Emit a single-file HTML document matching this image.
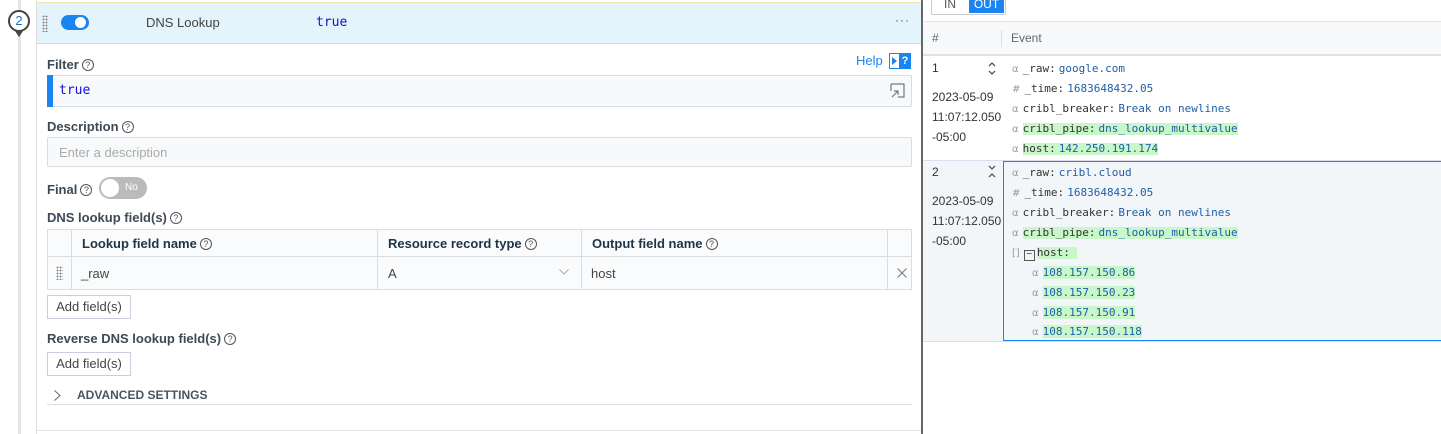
<!DOCTYPE html>
<html><head><meta charset="utf-8"><style>
*{margin:0;padding:0;box-sizing:border-box}
body{width:1441px;height:434px;overflow:hidden;background:#fff;font-family:"Liberation Sans",sans-serif;font-size:13px;color:#333;position:relative}
.a{position:absolute}
.lbl{font-weight:bold;color:#3d4a55;font-size:13px}
.q{display:inline-block;width:12px;height:12px;border:1px solid #555;border-radius:50%;font-size:9px;text-align:center;line-height:10px;color:#555;font-weight:normal;vertical-align:1px;margin-left:3px}
.mono{font-family:"DejaVu Sans Mono","Liberation Mono",monospace}
.ev{position:absolute;left:1012px;font-size:11px;height:19px;line-height:19px;white-space:nowrap}
.ev .t{color:#999;font-family:"DejaVu Sans",sans-serif;font-size:10px;margin-right:4px}
.ev .k{color:#333}
.ev .v{color:#1d5fa8}
.g{background:#c9f7c9}
.ts{position:absolute;left:932px;font-size:12px;color:#333;line-height:20px}
</style></head><body>
<div class="a" style="left:18px;top:0;width:3px;height:434px;background:#e3e3e3"></div>
<div class="a" style="left:8px;top:10px;width:22px;height:22px;border:2px solid #444;border-radius:50%;background:#fff;color:#1d6fc4;text-align:center;line-height:18px;font-size:13px">2</div>
<div class="a" style="left:15px;top:31px;width:0;height:0;border-left:4px solid transparent;border-right:4px solid transparent;border-top:6px solid #444"></div>
<div class="a" style="left:36px;top:0;width:886px;height:434px;border-left:1px solid #ddd"></div>
<div class="a" style="left:36px;top:2px;width:886px;height:1px;background:#f0e8b0"></div>
<div class="a" style="left:37px;top:3px;width:885px;height:41px;background:#e3f4fd;border-bottom:1px solid #c9dce6"></div>
<div class="a" style="left:42px;top:15px;width:6px;height:17px;background-image:radial-gradient(#888 0.8px,transparent 1px);background-size:3px 3px"></div>
<div class="a" style="left:61px;top:15px;width:28px;height:15px;border-radius:8px;background:#1a84f0"></div>
<div class="a" style="left:75px;top:17px;width:11px;height:11px;border-radius:50%;background:#fff"></div>
<div class="a" style="left:146px;top:15px;color:#444;font-size:13px">DNS Lookup</div>
<div class="a mono" style="left:316px;top:15px;color:#1010d0;font-size:13px">true</div>
<div class="a" style="left:895px;top:13px;color:#555;font-size:12px;letter-spacing:1px">···</div>
<div class="a lbl" style="left:47px;top:57px">Filter<span class="q">?</span></div>
<div class="a" style="left:856px;top:53px;color:#1a84f0;font-size:13px">Help</div>
<div class="a" style="left:889px;top:53px;width:22px;height:16px;border:1px solid #1a84f0;background:#fff"></div>
<div class="a" style="left:899px;top:54px;width:12px;height:14px;background:#1a84f0;color:#fff;font-weight:bold;font-size:11px;text-align:center;line-height:14px">?</div>
<div class="a" style="left:892px;top:57px;width:0;height:0;border-top:4px solid transparent;border-bottom:4px solid transparent;border-left:5px solid #1a84f0"></div>
<div class="a" style="left:47px;top:75px;width:865px;height:32px;background:#f7f9fb;border:1px solid #d8dde2;border-radius:2px"></div>
<div class="a" style="left:47px;top:75px;width:6px;height:32px;background:#1a84f0"></div>
<div class="a mono" style="left:59px;top:83px;color:#1010d0;font-size:13px">true</div>
<svg class="a" style="left:888px;top:82px" width="18" height="18" viewBox="0 0 18 18"><path d="M3 2H16V15H10M3 2V9M4 15L10 9M6 9H10V13" fill="none" stroke="#777" stroke-width="1.2"/></svg>
<div class="a lbl" style="left:47px;top:119px">Description<span class="q">?</span></div>
<div class="a" style="left:47px;top:137px;width:865px;height:30px;background:#f7f9fb;border:1px solid #d8dde2;border-radius:2px"></div>
<div class="a" style="left:59px;top:145px;color:#aaa">Enter a description</div>
<div class="a lbl" style="left:47px;top:182px">Final<span class="q">?</span></div>
<div class="a" style="left:99px;top:177px;width:48px;height:22px;border-radius:11px;background:#bbb"></div>
<div class="a" style="left:101px;top:179px;width:18px;height:18px;border-radius:50%;background:#fff"></div>
<div class="a" style="left:125px;top:182px;color:#fff;font-size:10px">No</div>
<div class="a lbl" style="left:47px;top:210px">DNS lookup field(s)<span class="q">?</span></div>
<div class="a" style="left:47px;top:229px;width:865px;height:61px;border:1px solid #ddd;background:#fafbfc"></div>
<div class="a" style="left:47px;top:256px;width:865px;height:1px;background:#ddd"></div>
<div class="a" style="left:71px;top:229px;width:1px;height:61px;background:#ddd"></div>
<div class="a" style="left:377px;top:229px;width:1px;height:61px;background:#ddd"></div>
<div class="a" style="left:581px;top:229px;width:1px;height:61px;background:#ddd"></div>
<div class="a" style="left:887px;top:229px;width:1px;height:61px;background:#ddd"></div>
<div class="a lbl" style="left:82px;top:236px;color:#1f3447">Lookup field name<span class="q">?</span></div>
<div class="a lbl" style="left:388px;top:236px;color:#1f3447">Resource record type<span class="q">?</span></div>
<div class="a lbl" style="left:592px;top:236px;color:#1f3447">Output field name<span class="q">?</span></div>
<div class="a" style="left:56px;top:266px;width:7px;height:14px;background-image:radial-gradient(#888 0.8px,transparent 1px);background-size:3px 3px"></div>
<div class="a" style="left:81px;top:266px;color:#444">_raw</div>
<div class="a" style="left:388px;top:266px;color:#444">A</div>
<svg class="a" style="left:559px;top:269px" width="10" height="6" viewBox="0 0 10 6"><path d="M0.5 0.5L5 5L9.5 0.5" fill="none" stroke="#aaa"/></svg>
<div class="a" style="left:591px;top:266px;color:#444">host</div>
<svg class="a" style="left:897px;top:268px" width="10" height="10" viewBox="0 0 10 10"><path d="M0.5 0.5L9.5 9.5M9.5 0.5L0.5 9.5" stroke="#777"/></svg>
<div class="a" style="left:47px;top:295px;width:84px;height:24px;border:1px solid #ccd;background:#fff;color:#444;text-align:center;line-height:22px">Add field(s)</div>
<div class="a lbl" style="left:47px;top:331px">Reverse DNS lookup field(s)<span class="q">?</span></div>
<div class="a" style="left:47px;top:352px;width:84px;height:24px;border:1px solid #ccd;background:#fff;color:#444;text-align:center;line-height:22px">Add field(s)</div>
<svg class="a" style="left:54px;top:390px" width="7" height="11" viewBox="0 0 7 11"><path d="M0.5 0.5L6 5.5L0.5 10.5" fill="none" stroke="#666"/></svg>
<div class="a" style="left:77px;top:388px;color:#4a5660;font-weight:bold;font-size:12px">ADVANCED SETTINGS</div>
<div class="a" style="left:47px;top:404px;width:865px;height:1px;background:#ddd"></div>
<div class="a" style="left:37px;top:430px;width:885px;height:1px;background:#e5e5e5"></div>
<div class="a" style="left:921px;top:0;width:2px;height:434px;background:#666"></div>
<div class="a" style="left:931px;top:-2px;width:75px;height:17px;border:1px solid #ccc;border-radius:2px;background:#fff"></div>
<div class="a" style="left:944px;top:-3px;color:#555;font-size:12px">IN</div>
<div class="a" style="left:969px;top:-3px;width:35px;height:16px;background:#1a84f0;color:#fff;font-size:12px;text-align:center">OUT</div>
<div class="a" style="left:923px;top:21px;width:518px;height:35px;background:#f7f9fb;border-top:1px solid #e3e6e9;border-bottom:2px solid #dde2e6"></div>
<div class="a" style="left:1001px;top:30px;width:1px;height:17px;background:#ddd"></div>
<div class="a" style="left:932px;top:31px;color:#666;font-size:12px">#</div>
<div class="a" style="left:1011px;top:31px;color:#666;font-size:12px">Event</div>
<div class="ts" style="top:58px">1</div>
<svg class="a" style="left:988px;top:62px" width="8" height="13" viewBox="0 0 8 13"><path d="M1 4L4 1L7 4M1 9L4 12L7 9" fill="none" stroke="#555" stroke-width="1.3"/></svg>
<div class="ts" style="top:87px">2023-05-09<br>11:07:12.050<br>-05:00</div>
<div class="a" style="left:923px;top:160px;width:518px;height:1px;background:#dde"></div>
<div class="a" style="left:923px;top:161px;width:518px;height:180px;background:#f3f6f9"></div>
<div class="a" style="left:1003px;top:161px;width:438px;height:180px;border:1px solid #1a84f0;border-right:none"></div>
<div class="a" style="left:923px;top:341px;width:518px;height:1px;background:#dde"></div>
<div class="ts" style="top:162px">2</div>
<svg class="a" style="left:988px;top:165px" width="8" height="13" viewBox="0 0 8 13"><path d="M1 1L4 4L7 1M1 12L4 9L7 12" fill="none" stroke="#555" stroke-width="1.3"/></svg>
<div class="ts" style="top:191px">2023-05-09<br>11:07:12.050<br>-05:00</div>

<div class="ev" style="top:59px"><span class="t">α</span><span class="k mono">_raw:</span> <span class="v mono">google.com</span></div>
<div class="ev" style="top:79px"><span class="t">#</span><span class="k mono">_time:</span> <span class="v mono">1683648432.05</span></div>
<div class="ev" style="top:99px"><span class="t">α</span><span class="k mono">cribl_breaker:</span> <span class="v mono">Break on newlines</span></div>
<div class="ev" style="top:119px"><span class="t">α</span><span class="g"><span class="k mono">cribl_pipe:</span> <span class="v mono">dns_lookup_multivalue</span></span></div>
<div class="ev" style="top:139px"><span class="t">α</span><span class="g"><span class="k mono">host:</span> <span class="v mono">142.250.191.174</span></span></div>

<div class="ev" style="top:163px"><span class="t">α</span><span class="k mono">_raw:</span> <span class="v mono">cribl.cloud</span></div>
<div class="ev" style="top:183px"><span class="t">#</span><span class="k mono">_time:</span> <span class="v mono">1683648432.05</span></div>
<div class="ev" style="top:203px"><span class="t">α</span><span class="k mono">cribl_breaker:</span> <span class="v mono">Break on newlines</span></div>
<div class="ev" style="top:223px"><span class="t">α</span><span class="g"><span class="k mono">cribl_pipe:</span> <span class="v mono">dns_lookup_multivalue</span></span></div>
<div class="ev" style="top:243px"><span class="t">[]</span><span style="display:inline-block;width:11px;height:11px;border:1px solid #555;vertical-align:-1px;text-align:center;line-height:8px;font-size:10px;margin-right:2px">−</span><span class="g"><span class="k mono">host:&nbsp;</span></span></div>
<div class="ev" style="top:263px;left:1032px"><span class="t">α</span><span class="g v mono">108.157.150.86</span></div>
<div class="ev" style="top:283px;left:1032px"><span class="t">α</span><span class="g v mono">108.157.150.23</span></div>
<div class="ev" style="top:303px;left:1032px"><span class="t">α</span><span class="g v mono">108.157.150.91</span></div>
<div class="ev" style="top:322px;left:1032px"><span class="t">α</span><span class="g v mono">108.157.150.118</span></div>
</body></html>
